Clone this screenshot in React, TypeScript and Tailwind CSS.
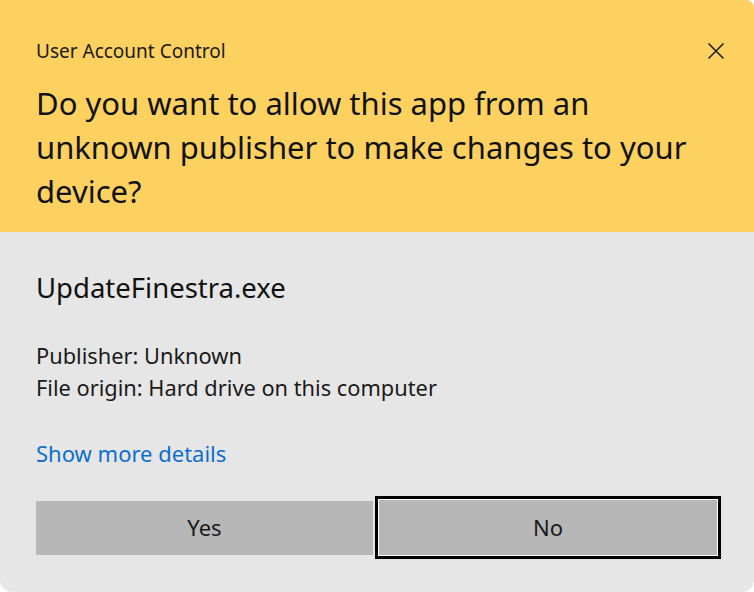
import React from 'react';

export default function App() {
  return (
    <div className="w-[754px] h-[592px] bg-white" style={{ fontFamily: '"Noto Sans", "Open Sans", sans-serif' }}>
      <div className="w-full h-full flex flex-col overflow-hidden rounded-tr-lg rounded-b-xl bg-[#e6e6e6]">
        {/* Header */}
        <div className="h-[232px] bg-[#fdd15f] pl-9 pr-6 pt-[38px] flex flex-col">
          <div className="flex items-start justify-between">
            <p className="text-[19px] leading-[28px] text-[#1a1a1a] -mt-[1px]">User Account Control</p>
            <button className="w-8 h-8 flex items-center justify-center -mt-[3px] -mr-[2px]">
              <svg width="18" height="18" viewBox="0 0 18 18" fill="none" stroke="#1a1a1a" strokeWidth="1.5">
                <path d="M1.5 1.5 L16.5 16.5 M16.5 1.5 L1.5 16.5" />
              </svg>
            </button>
          </div>
          <h1 className="text-[31px] leading-[44px] text-[#111] mt-[14px] pr-6">
            Do you want to allow this app from an unknown publisher to make changes to your device?
          </h1>
        </div>

        {/* Body */}
        <div className="flex-1 flex flex-col pl-9 pt-[38px]">
          <p className="text-[27.5px] leading-[36px] text-[#111]">UpdateFinestra.exe</p>
          <div className="mt-[34px] text-[21.8px] leading-[32px] text-[#1a1a1a]">
            <p>Publisher: Unknown</p>
            <p>File origin: Hard drive on this computer</p>
          </div>
          <a className="mt-[34px] text-[22px] leading-[30px] text-[#0a6fcc] w-fit">Show more details</a>

          <div className="mt-[28px] flex items-center gap-[2px]">
            <button className="w-[337px] h-[54px] bg-[#b7b7b7] text-[22px] text-[#1a1a1a]">Yes</button>
            <div className="w-[346px] h-[63px] border-[3px] border-black">
              <button className="w-full h-full border border-white bg-[#b7b7b7] text-[22px] text-[#1a1a1a]">No</button>
            </div>
          </div>
        </div>
      </div>
    </div>
  );
}
